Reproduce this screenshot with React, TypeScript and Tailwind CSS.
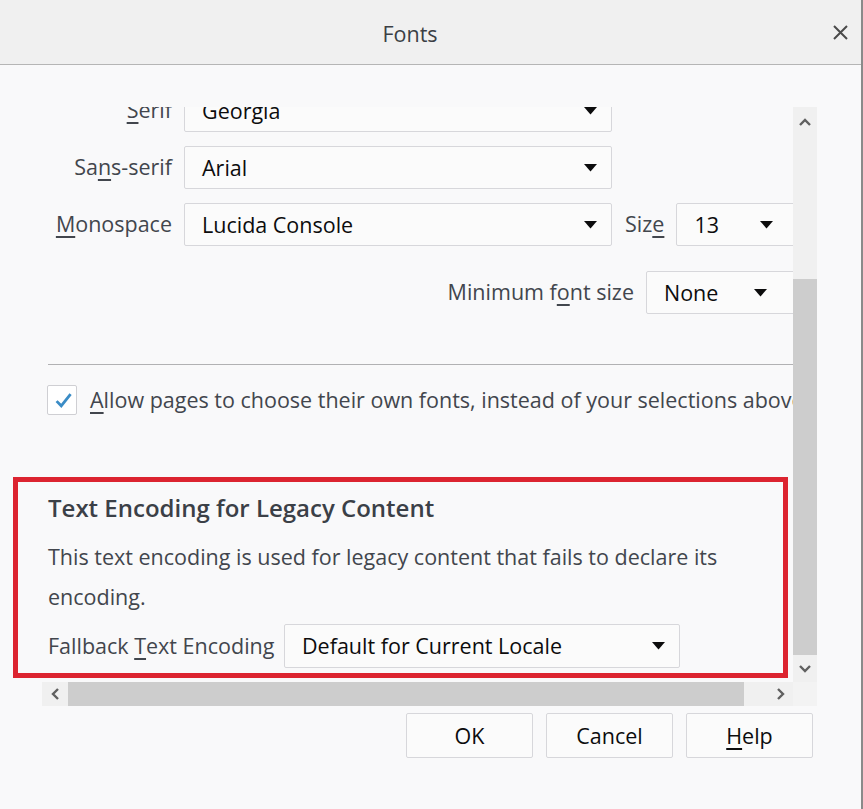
import React from 'react';

const label = 'text-[#42464d]';
const font = { fontFamily: '"Open Sans", "Noto Sans", sans-serif' };

function Key({ children }: { children: React.ReactNode }) {
  return <span className="underline decoration-[1.5px] underline-offset-[4px]">{children}</span>;
}

function Arrow() {
  return (
    <svg width="13" height="8" viewBox="0 0 13 8" className="shrink-0">
      <path d="M0 0 H13 L6.5 7.5 Z" fill="#0c0c0d" />
    </svg>
  );
}

function Select({ value, className = '', arrowRight = 'pr-[14px]' }: { value: string; className?: string; arrowRight?: string }) {
  return (
    <div
      className={`h-[43px] shrink-0 flex items-center justify-between pl-[17px] ${arrowRight} bg-[#fbfbfb] border border-[#d7d7db] rounded-[2px] text-[#0c0c0d] ${className}`}
    >
      <span className="whitespace-nowrap pt-[1px]">{value}</span>
      <Arrow />
    </div>
  );
}

function Chevron({ dir }: { dir: 'up' | 'down' | 'left' | 'right' }) {
  const d = {
    up: 'M1 7 L6 2 L11 7',
    down: 'M1 2 L6 7 L11 2',
    left: 'M7 1 L2 6 L7 11',
    right: 'M2 1 L7 6 L2 11',
  }[dir];
  const vertical = dir === 'up' || dir === 'down';
  return (
    <svg width={vertical ? 12 : 9} height={vertical ? 9 : 12} viewBox={vertical ? '0 0 12 9' : '0 0 9 12'}>
      <path d={d} fill="none" stroke="#606060" strokeWidth="2.4" />
    </svg>
  );
}

export default function App() {
  return (
    <div className="w-[863px] h-[809px] relative bg-[#f9f9fa] flex flex-col text-[21.5px] overflow-hidden border-r-2 border-[#8a8a8a]" style={font}>
      <header className="h-[65px] shrink-0 bg-[#f0f0f0] border-b border-[#b5b5b5] flex items-center">
        <div className="w-[820px] text-center text-[#3b3f45] pt-[4px]">Fonts</div>
        <div className="flex-1 flex justify-center">
          <svg width="15" height="15" viewBox="0 0 15 15">
            <path d="M1 1 L14 14 M14 1 L1 14" stroke="#4a4a4a" strokeWidth="2" />
          </svg>
        </div>
      </header>

      <div className="pt-[42px] pl-[42px]">
        <div className="flex">
          <div className="w-[751px] h-[575px] overflow-hidden">
            <div className="w-[778px] -mt-[18px] pl-[6px] flex flex-col">
              <div className="flex items-center">
                <div className={`w-[124px] text-right ${label}`}><Key>S</Key>erif</div>
                <Select value="Georgia" className="ml-[12px] w-[428px]" />
              </div>
              <div className="flex items-center mt-[14px]">
                <div className={`w-[124px] text-right ${label}`}>Sa<Key>n</Key>s-serif</div>
                <Select value="Arial" className="ml-[12px] w-[428px]" />
              </div>
              <div className="flex items-center mt-[14px]">
                <div className={`w-[124px] text-right ${label}`}><Key>M</Key>onospace</div>
                <Select value="Lucida Console" className="ml-[12px] w-[428px]" />
                <div className={`ml-[13px] ${label}`}>Siz<Key>e</Key></div>
                <Select value="13" className="ml-[12px] w-[130px]" arrowRight="pr-[32px]" />
              </div>
              <div className="flex items-center mt-[25px]">
                <div className={`w-[586px] text-right ${label}`}>Minimum f<Key>o</Key>nt size</div>
                <Select value="None" className="ml-[12px] w-[160px]" arrowRight="pr-[38px]" />
              </div>
              <div className="mt-[50px] h-px bg-[#b1b1b3] w-full" />
              <div className="flex items-center mt-[20px] h-[30px]">
                <div className="w-[30px] h-[30px] -ml-[1px] bg-white border border-[#cfcfd3] rounded-[2px] flex items-center justify-center">
                  <svg width="30" height="30" viewBox="0 0 30 30">
                    <path d="M9.2 16.2 L14.2 21.2 L24.2 8.6" fill="none" stroke="#3a8cc6" strokeWidth="3" />
                  </svg>
                </div>
                <div className={`ml-[13px] whitespace-nowrap pt-[1px] ${label}`}>
                  <Key>A</Key>llow pages to choose their own fonts, instead of your selections above
                </div>
              </div>

              <div className="mt-[78px] text-[#3b4047] text-[24px] font-semibold leading-[30px]">Text Encoding for Legacy Content</div>
              <p className={`mt-[14px] max-w-[700px] leading-[40px] ${label}`}>
                This text encoding is used for legacy content that fails to declare its encoding.
              </p>
              <div className="flex items-center mt-[7px]">
                <div className={`w-[236px] whitespace-nowrap ${label}`}>Fallback <Key>T</Key>ext Encoding</div>
                <Select value="Default for Current Locale" className="w-[396px] h-[44px]" />
              </div>
            </div>
          </div>

          <div className="w-[24px] h-[575px] bg-[#f0f0f0] flex flex-col">
            <div className="h-[28px] flex items-center justify-center pt-[2px]">
              <Chevron dir="up" />
            </div>
            <div className="h-[144px]" />
            <div className="h-[376px] bg-[#cdcdcd]" />
            <div className="flex-1 flex items-center justify-center">
              <Chevron dir="down" />
            </div>
          </div>
        </div>

        <div className="flex h-[24px]">
          <div className="w-[26px] bg-[#f0f0f0] flex items-center justify-center">
            <Chevron dir="left" />
          </div>
          <div className="w-[676px] bg-[#cdcdcd]" />
          <div className="w-[24px] bg-[#f0f0f0]" />
          <div className="w-[25px] bg-[#f0f0f0] flex items-center justify-center">
            <Chevron dir="right" />
          </div>
          <div className="w-[24px] bg-[#f3f3f3]" />
        </div>
      </div>

      <div className="flex justify-end gap-[13px] pr-[48px] mt-[7px]">
        {['OK', 'Cancel', 'Help'].map((b) => (
          <button
            key={b}
            className="w-[127px] h-[45px] pt-[2px] bg-[#fbfbfb] border border-[#d7d7db] rounded-[2px] text-[#0c0c0d]"
          >
            {b === 'Help' ? (
              <>
                <Key>H</Key>elp
              </>
            ) : (
              b
            )}
          </button>
        ))}
      </div>

      <div className="absolute left-[13px] top-[477px] w-[775px] h-[201px] border-[5px] border-[#dc2430] pointer-events-none" />
    </div>
  );
}
